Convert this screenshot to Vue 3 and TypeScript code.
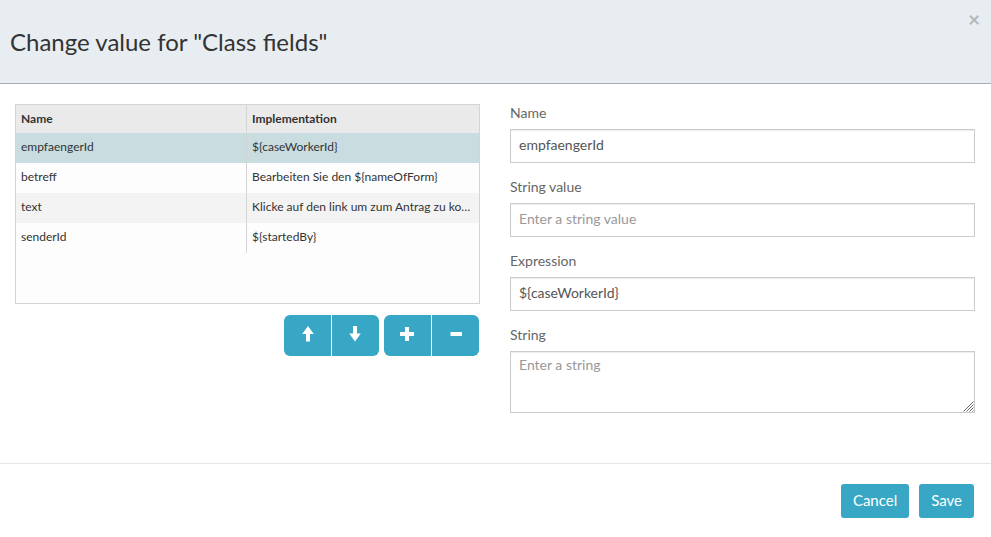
<script setup lang="ts">
import { computed, ref } from 'vue'

interface ClassField {
  name: string
  stringValue: string
  expression: string
  text: string
}

const fields = ref<ClassField[]>([
  { name: 'empfaengerId', stringValue: '', expression: '${caseWorkerId}', text: '' },
  { name: 'betreff', stringValue: 'Bearbeiten Sie den ${nameOfForm}', expression: '', text: '' },
  { name: 'text', stringValue: '', expression: '', text: 'Klicke auf den link um zum Antrag zu kommen' },
  { name: 'senderId', stringValue: '', expression: '${startedBy}', text: '' },
])
const selectedIndex = ref(0)
const selected = computed(() => fields.value[selectedIndex.value])

function implementation(field: ClassField): string {
  return field.stringValue || field.expression || field.text
}

function move(offset: number): void {
  const from = selectedIndex.value
  const to = from + offset
  if (to < 0 || to >= fields.value.length) return
  const [item] = fields.value.splice(from, 1)
  fields.value.splice(to, 0, item)
  selectedIndex.value = to
}

function addField(): void {
  fields.value.push({ name: '', stringValue: '', expression: '', text: '' })
  selectedIndex.value = fields.value.length - 1
}

function removeField(): void {
  if (fields.value.length < 2) return
  fields.value.splice(selectedIndex.value, 1)
  selectedIndex.value = Math.max(0, selectedIndex.value - 1)
}
</script>

<template>
  <div class="dialog" role="dialog" aria-labelledby="dialog-title">
    <header class="header">
      <h3 id="dialog-title" class="title">Change value for "Class fields"</h3>
      <button type="button" class="close" aria-label="Close">×</button>
    </header>

    <main class="body">
      <section class="list">
        <div class="grid-box">
          <table class="table">
            <colgroup>
              <col class="col-name" />
              <col />
            </colgroup>
            <thead>
              <tr>
                <th scope="col">Name</th>
                <th scope="col">Implementation</th>
              </tr>
            </thead>
            <tbody>
              <tr
                v-for="(field, index) in fields"
                :key="index"
                :class="{ selected: index === selectedIndex }"
                @click="selectedIndex = index"
              >
                <td>{{ field.name }}</td>
                <td>{{ implementation(field) }}</td>
              </tr>
            </tbody>
          </table>
        </div>

        <div class="toolbar">
          <div class="group">
            <button type="button" class="tool" aria-label="Move up" @click="move(-1)">
              <svg width="15" height="16" viewBox="0 0 15 16"><path d="M8 0 13.800 8H10v7.500H6V8H2.200Z" /></svg>
            </button>
            <button type="button" class="tool" aria-label="Move down" @click="move(1)">
              <svg width="15" height="16" viewBox="0 0 15 16"><path d="M7 15.500 1.200 7.500H5V0h4v7.500h3.800Z" /></svg>
            </button>
          </div>
          <div class="group">
            <button type="button" class="tool" aria-label="Add" @click="addField">
              <svg width="15" height="16" viewBox="0 0 15 16"><path d="M5 1h4v5h5v4H9v5H5v-5H0V6h5Z" /></svg>
            </button>
            <button type="button" class="tool" aria-label="Remove" @click="removeField">
              <svg width="15" height="16" viewBox="0 0 15 16"><rect x="2.500" y="6" width="11.500" height="4" rx="0.500" /></svg>
            </button>
          </div>
        </div>
      </section>

      <form class="form" @submit.prevent>
        <div class="field">
          <label for="field-name">Name</label>
          <input id="field-name" v-model="selected.name" type="text" class="control" />
        </div>
        <div class="field">
          <label for="field-string-value">String value</label>
          <input
            id="field-string-value"
            v-model="selected.stringValue"
            type="text"
            class="control"
            placeholder="Enter a string value"
          />
        </div>
        <div class="field">
          <label for="field-expression">Expression</label>
          <input id="field-expression" v-model="selected.expression" type="text" class="control" />
        </div>
        <div class="field">
          <label for="field-string">String</label>
          <div class="area-wrap">
            <textarea id="field-string" v-model="selected.text" class="control area" placeholder="Enter a string"></textarea>
            <svg class="grip" width="11" height="11" viewBox="0 0 11 11" aria-hidden="true">
              <path d="M0.500 10.500l10-10M3.500 10.500l7-7M6.500 10.500l4-4M9.500 10.500l1-1" />
            </svg>
          </div>
        </div>
      </form>
    </main>

    <footer class="footer">
      <button type="button" class="btn">Cancel</button>
      <button type="button" class="btn">Save</button>
    </footer>
  </div>
</template>

<style>
body {
  background: #fff;
}
</style>

<style scoped>
.dialog,
.dialog * {
  box-sizing: border-box;
}
.dialog {
  font-family: Lato, 'Liberation Sans', sans-serif;
  font-size: 14px;
  line-height: 20px;
  color: #333;
}
button,
input,
textarea {
  font-family: inherit;
}
.header {
  display: flex;
  align-items: flex-start;
  justify-content: space-between;
  padding: 9px 10px 11px;
  background: #e8edf1;
  border-bottom: 1px solid #a4acb9;
}
.title {
  margin: 0;
  padding: 17px 0 14px;
  font-size: 24px;
  line-height: 32px;
  font-weight: 400;
}
.close {
  padding: 0;
  width: 14px;
  border: 0;
  background: none;
  color: #b3b8bb;
  font-size: 21px;
  font-weight: 700;
  line-height: 20px;
  cursor: pointer;
}
.body {
  display: grid;
  grid-template-columns: minmax(0, 1fr) minmax(0, 1fr);
  gap: 30px;
  padding: 20px 16px 50px 15px;
}
.grid-box {
  height: 200px;
  overflow: auto;
  border: 1px solid #d4d4d4;
  background: #fdfdfd;
}
.table {
  width: 100%;
  table-layout: fixed;
  border-collapse: separate;
  border-spacing: 0;
  font-size: 12px;
}
.col-name {
  width: 231px;
}
.table th,
.table td {
  padding: 0 5px;
  overflow: hidden;
  text-align: left;
  text-overflow: ellipsis;
  white-space: nowrap;
  vertical-align: top;
}
.table th {
  height: 28px;
  line-height: 28px;
  font-weight: 700;
  background: #eaeaea;
}
.table td {
  height: 30px;
  line-height: 28px;
}
.table th:first-child,
.table td:first-child {
  border-right: 1px solid #d4d4d4;
}
.table tbody tr:nth-child(odd) {
  background: #f3f3f3;
}
.table tbody tr.selected {
  background: #c9dde1;
}
.toolbar {
  display: flex;
  justify-content: flex-end;
  gap: 5px;
  padding: 11px 1px 0 0;
}
.group {
  display: flex;
  gap: 1px;
}
.tool {
  display: flex;
  align-items: flex-start;
  justify-content: center;
  width: 47px;
  height: 41px;
  padding: 11px 0 0;
  border: 0;
  background: #38a7c6;
  cursor: pointer;
}
.tool svg {
  fill: #fff;
}
.tool:first-child {
  border-radius: 6px 0 0 6px;
}
.tool:last-child {
  border-radius: 0 6px 6px 0;
}
.form {
  display: flex;
  flex-direction: column;
  gap: 15px;
}
.field {
  display: flex;
  flex-direction: column;
  gap: 7px;
}
.field label {
  line-height: 18px;
  color: #666;
}
.control {
  display: block;
  width: 100%;
  height: 34px;
  margin: 0;
  padding: 3px 8px 7px;
  border: 1px solid #ccc;
  border-radius: 0;
  background: #fff;
  box-shadow: inset 0 1px 1px rgba(0, 0, 0, 0.075);
  color: #555;
  font-size: 14px;
  line-height: 20px;
  outline: none;
}
.control::placeholder {
  color: #999;
  opacity: 1;
}
.area-wrap {
  position: relative;
}
.area {
  height: 62px;
  resize: vertical;
}
.area::-webkit-resizer {
  background: transparent;
}
.grip {
  position: absolute;
  right: 1px;
  bottom: 1px;
  fill: none;
  stroke: #666;
  stroke-width: 1;
  pointer-events: none;
}
.footer {
  display: flex;
  justify-content: flex-end;
  gap: 10px;
  padding: 20px 17px 19px;
  border-top: 1px solid #e5e5e5;
}
.btn {
  height: 34px;
  padding: 0 12px 2px;
  border: 0;
  border-radius: 3px;
  background: #38a7c6;
  color: #fff;
  font-size: 15px;
  line-height: 32px;
  cursor: pointer;
}
</style>
